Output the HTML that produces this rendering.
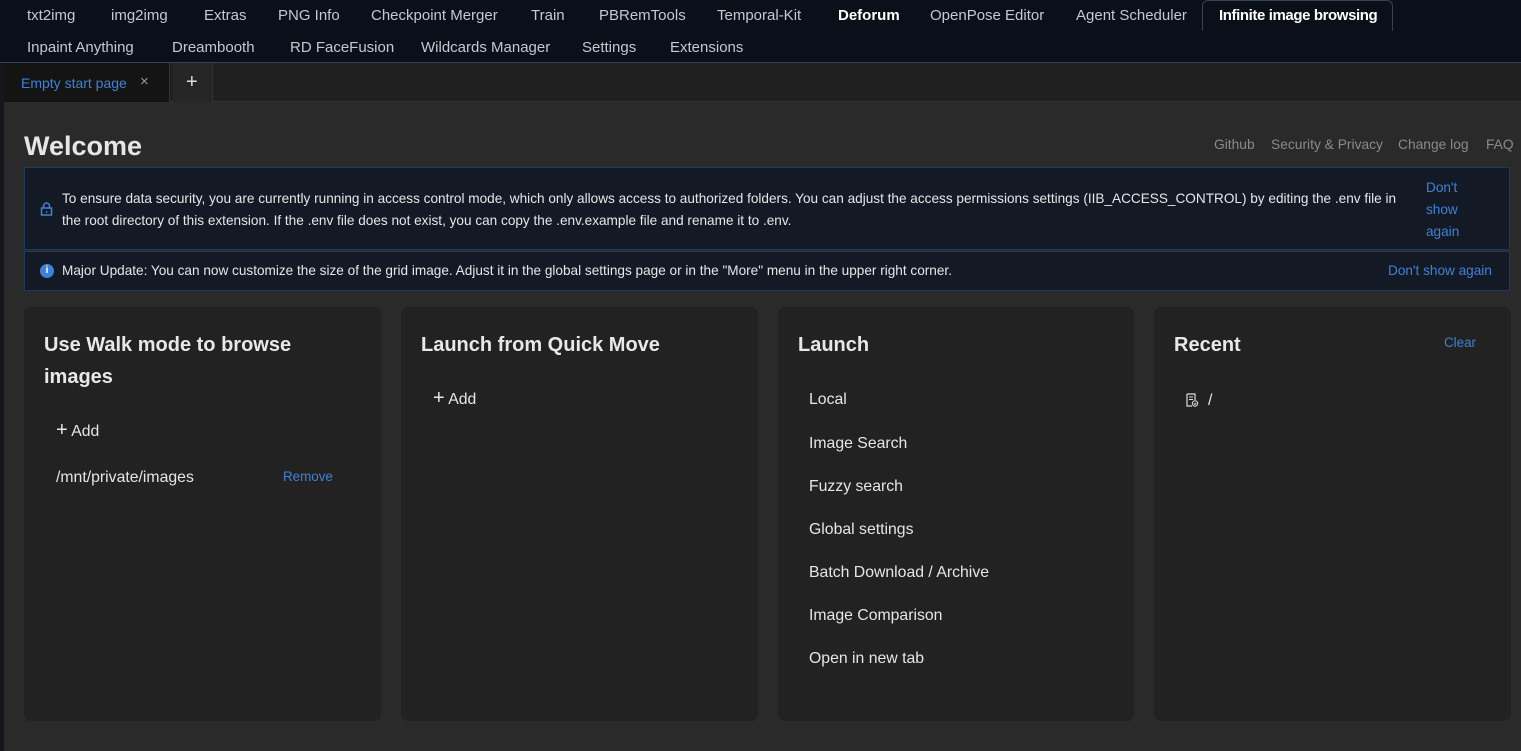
<!DOCTYPE html>
<html><head><meta charset="utf-8"><style>
*{box-sizing:border-box;margin:0;padding:0}
body{width:1521px;height:751px;overflow:hidden;background:#0b0f19;font-family:"Liberation Sans",sans-serif;position:relative;color:#ddd}
.a{position:absolute;white-space:nowrap}
.nav{font-size:15px;color:#c5c8cf}
.blue{color:#3d82d6}
.card{position:absolute;top:307px;height:414px;background:#222;border-radius:7px}
.card h2{position:absolute;left:20px;top:22px;font-size:20px;font-weight:bold;color:#e8e8e8;line-height:32px}
.item{position:absolute;font-size:15.8px;color:#e6e6e6}
</style></head><body>
<div class="a nav" style="left:27px;top:7px">txt2img</div>
<div class="a nav" style="left:111px;top:7px">img2img</div>
<div class="a nav" style="left:204px;top:7px">Extras</div>
<div class="a nav" style="left:278px;top:7px">PNG Info</div>
<div class="a nav" style="left:371px;top:7px">Checkpoint Merger</div>
<div class="a nav" style="left:531px;top:7px">Train</div>
<div class="a nav" style="left:599px;top:7px">PBRemTools</div>
<div class="a nav" style="left:717px;top:7px">Temporal-Kit</div>
<div class="a nav" style="left:838px;top:7px;color:#fff;font-weight:bold">Deforum</div>
<div class="a nav" style="left:930px;top:7px">OpenPose Editor</div>
<div class="a nav" style="left:1076px;top:7px">Agent Scheduler</div>
<div class="a" style="left:1202px;top:0;width:191px;height:31px;border:1px solid #374151;border-bottom:none;border-top-left-radius:6px;border-top-right-radius:6px"></div>
<div class="a nav" style="left:1219px;top:7px;color:#fff;font-weight:bold;letter-spacing:-0.4px">Infinite image browsing</div>
<div class="a nav" style="left:27px;top:39px">Inpaint Anything</div>
<div class="a nav" style="left:172px;top:39px">Dreambooth</div>
<div class="a nav" style="left:290px;top:39px">RD FaceFusion</div>
<div class="a nav" style="left:421px;top:39px">Wildcards Manager</div>
<div class="a nav" style="left:582px;top:39px">Settings</div>
<div class="a nav" style="left:670px;top:39px">Extensions</div>
<div class="a" style="left:0;top:62px;width:1521px;height:689px;background:#2a2a2a;border-top:1px solid #374151"></div>
<div class="a" style="left:0;top:63px;width:4px;height:688px;background:#15171c"></div>
<div class="a" style="left:4px;top:63px;width:1517px;height:39px;background:#202020;border-bottom:1px solid #333"></div>
<div class="a" style="left:4px;top:63px;width:166px;height:39px;background:#141414;border-right:1px solid #333"></div>
<div class="a blue" style="left:21px;top:75px;font-size:14px">Empty start page</div>
<div class="a" style="left:140px;top:73px;font-size:15px;color:#999">×</div>
<div class="a" style="left:173px;top:63px;width:40px;height:39px;background:#262626;border-right:1px solid #333"></div>
<div class="a" style="left:186px;top:71px;font-size:20px;color:#ddd">+</div>
<div class="a" style="left:24px;top:131px;font-size:27px;font-weight:bold;color:#e6e6e6">Welcome</div>
<div class="a" style="left:1214px;top:137px;font-size:13.8px;color:#8a8a8a">Github</div>
<div class="a" style="left:1271px;top:137px;font-size:13.8px;color:#8a8a8a">Security &amp; Privacy</div>
<div class="a" style="left:1398px;top:137px;font-size:13.8px;color:#8a8a8a">Change log</div>
<div class="a" style="left:1486px;top:137px;font-size:13.8px;color:#8a8a8a">FAQ</div>
<div class="a" style="left:24px;top:167px;width:1486px;height:83px;background:#131a26;border:1px solid #1d3a5e"></div>
<svg class="a" style="left:40px;top:202px" width="13" height="14" viewBox="0 0 13 14"><rect x="1.5" y="6" width="10" height="7" fill="none" stroke="#3d82d6" stroke-width="1.5"/><path d="M3.5 6V4a3 3 0 016 0v2" fill="none" stroke="#3d82d6" stroke-width="1.5"/><rect x="6" y="9" width="1.2" height="2" fill="#3d82d6"/></svg>
<div class="a" style="left:62px;top:188px;font-size:13.6px;line-height:22px;color:#e6e6e6">To ensure data security, you are currently running in access control mode, which only allows access to authorized folders. You can adjust the access permissions settings (IIB_ACCESS_CONTROL) by editing the .env file in<br>the root directory of this extension. If the .env file does not exist, you can copy the .env.example file and rename it to .env.</div>
<div class="a blue" style="left:1426px;top:177px;font-size:13.6px;line-height:22px">Don't<br>show<br>again</div>
<div class="a" style="left:24px;top:251px;width:1486px;height:40px;background:#131a26;border:1px solid #1d3a5e"></div>
<div class="a" style="left:40px;top:264px;width:14px;height:14px;border-radius:50%;background:#3d82d6;color:#fff;font-size:10px;font-weight:bold;text-align:center;line-height:14px">i</div>
<div class="a" style="left:62px;top:263px;font-size:13.6px;color:#e6e6e6">Major Update: You can now customize the size of the grid image. Adjust it in the global settings page or in the "More" menu in the upper right corner.</div>
<div class="a blue" style="left:1388px;top:263px;font-size:13.6px">Don't show again</div>

<div class="card" style="left:24px;width:357px"><h2>Use Walk mode to browse<br>images</h2>
<div class="item" style="left:32px;top:115px"><span style="font-size:20px;line-height:16px">+</span> Add</div>
<div class="item" style="left:32px;top:162px">/mnt/private/images</div>
<div class="a blue" style="left:259px;top:162px;font-size:13.4px">Remove</div></div>
<div class="card" style="left:401px;width:357px"><h2>Launch from Quick Move</h2>
<div class="item" style="left:32px;top:83px"><span style="font-size:20px;line-height:16px">+</span> Add</div></div>
<div class="card" style="left:778px;width:356px"><h2>Launch</h2>
<div class="item" style="left:31px;top:84px">Local</div>
<div class="item" style="left:31px;top:128px">Image Search</div>
<div class="item" style="left:31px;top:171px">Fuzzy search</div>
<div class="item" style="left:31px;top:214px">Global settings</div>
<div class="item" style="left:31px;top:257px">Batch Download / Archive</div>
<div class="item" style="left:31px;top:300px">Image Comparison</div>
<div class="item" style="left:31px;top:343px">Open in new tab</div></div>
<div class="card" style="left:1154px;width:357px"><h2>Recent</h2>
<div class="a blue" style="left:290px;top:28px;font-size:13.4px">Clear</div>
<svg class="a" style="left:32px;top:86px" width="13" height="14" viewBox="0 0 13 14"><path d="M1 1h8v6M1 1v12h5" fill="none" stroke="#ddd" stroke-width="1.2"/><path d="M3 4h4M3 6.5h4" stroke="#ddd"/><circle cx="9" cy="10.5" r="2.7" fill="none" stroke="#ddd"/><path d="M7.8 10.5l1 1 1.5-1.7" fill="none" stroke="#ddd"/></svg>
<div class="item" style="left:54px;top:85px">/</div></div>
</body></html>
